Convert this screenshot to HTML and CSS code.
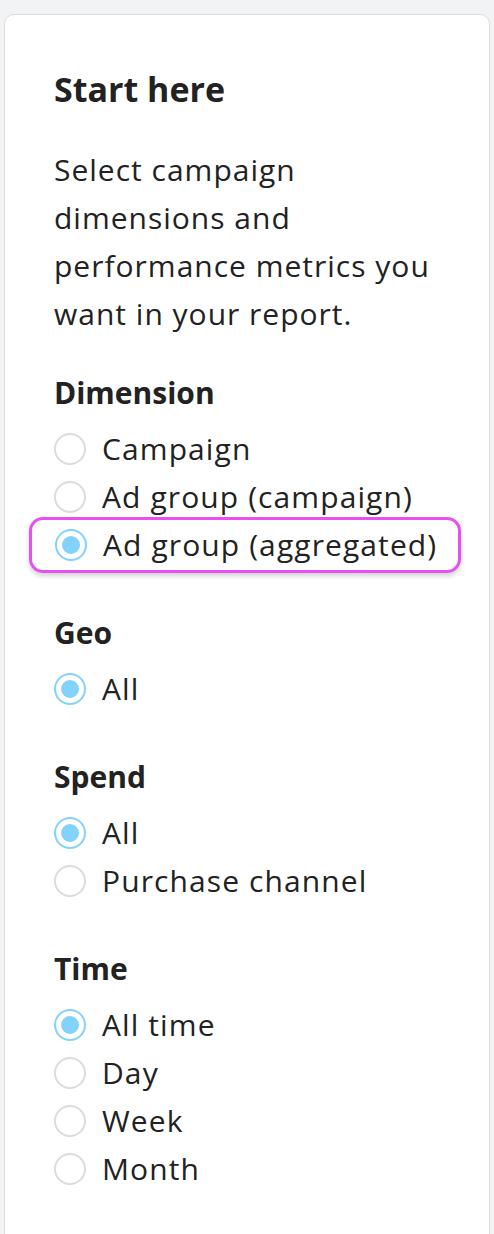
FILE: index.html
```html
<!DOCTYPE html>
<html>
<head>
<meta charset="utf-8">
<link rel="stylesheet" href="styles.css">
</head>
<body>
<div class="card">
  <h1 class="title">Start here</h1>
  <p class="intro">Select campaign dimensions and performance metrics you want in your report.</p>

  <div class="group">
    <h2 class="group-title">Dimension</h2>
    <div class="option"><span class="radio"></span><span class="label">Campaign</span></div>
    <div class="option"><span class="radio"></span><span class="label">Ad group (campaign)</span></div>
    <div class="option highlight"><span class="radio checked"></span><span class="label">Ad group (aggregated)</span></div>
  </div>

  <div class="group">
    <h2 class="group-title">Geo</h2>
    <div class="option"><span class="radio checked"></span><span class="label">All</span></div>
  </div>

  <div class="group">
    <h2 class="group-title">Spend</h2>
    <div class="option"><span class="radio checked"></span><span class="label">All</span></div>
    <div class="option"><span class="radio"></span><span class="label">Purchase channel</span></div>
  </div>

  <div class="group">
    <h2 class="group-title">Time</h2>
    <div class="option"><span class="radio checked"></span><span class="label">All time</span></div>
    <div class="option"><span class="radio"></span><span class="label">Day</span></div>
    <div class="option"><span class="radio"></span><span class="label">Week</span></div>
    <div class="option"><span class="radio"></span><span class="label">Month</span></div>
  </div>
</div>
</body>
</html>
```

FILE: styles.css
```css
html, body {
  margin: 0;
  padding: 0;
  background: #f2f3f5;
}
body {
  padding: 14px 4px 0 4px;
  font-family: "Open Sans", "Noto Sans", sans-serif;
  color: #222;
  height: 1234px;
  box-sizing: border-box;
  overflow: hidden;
}
.card {
  background: #fff;
  border: 1px solid #dcdcdc;
  border-radius: 10px;
  padding: 54px 20px 60px 49px;
  min-height: 1300px;
  box-sizing: border-box;
}
.title {
  margin: 0;
  font-size: 34px;
  font-weight: 700;
  line-height: 40px;
}
.intro {
  margin: 37px 0 0 0;
  font-size: 30px;
  letter-spacing: 1px;
  line-height: 48px;
  max-width: 390px;
}
.group {
  margin-top: 31px;
  display: flex;
  flex-direction: column;
}
.group + .group {
  margin-top: 40px;
}
.group-title {
  margin: 0 0 8px 0;
  font-size: 30px;
  font-weight: 700;
  line-height: 48px;
}
.option {
  display: flex;
  align-items: center;
  gap: 16px;
  height: 48px;
  font-size: 30px;
  letter-spacing: 1.1px;
}
.label {
  line-height: 48px;
  white-space: nowrap;
}
.radio {
  width: 32px;
  height: 32px;
  border: 2px solid #dcdcdc;
  border-radius: 50%;
  box-sizing: border-box;
  display: flex;
  align-items: center;
  justify-content: center;
  flex-shrink: 0;
}
.radio.checked {
  border-color: #82d2fb;
}
.radio.checked::after {
  content: "";
  width: 18px;
  height: 18px;
  border-radius: 50%;
  background: #82d2fb;
}
.highlight {
  align-self: flex-start;
  margin-left: -25px;
  padding: 0 21px 0 23px;
  height: 56px;
  margin-top: -4px;
  margin-bottom: -4px;
  border: 3px solid #e64ff0;
  border-radius: 14px;
  box-sizing: border-box;
  box-shadow: 0 3px 5px rgba(0,0,0,0.18);
}
```
